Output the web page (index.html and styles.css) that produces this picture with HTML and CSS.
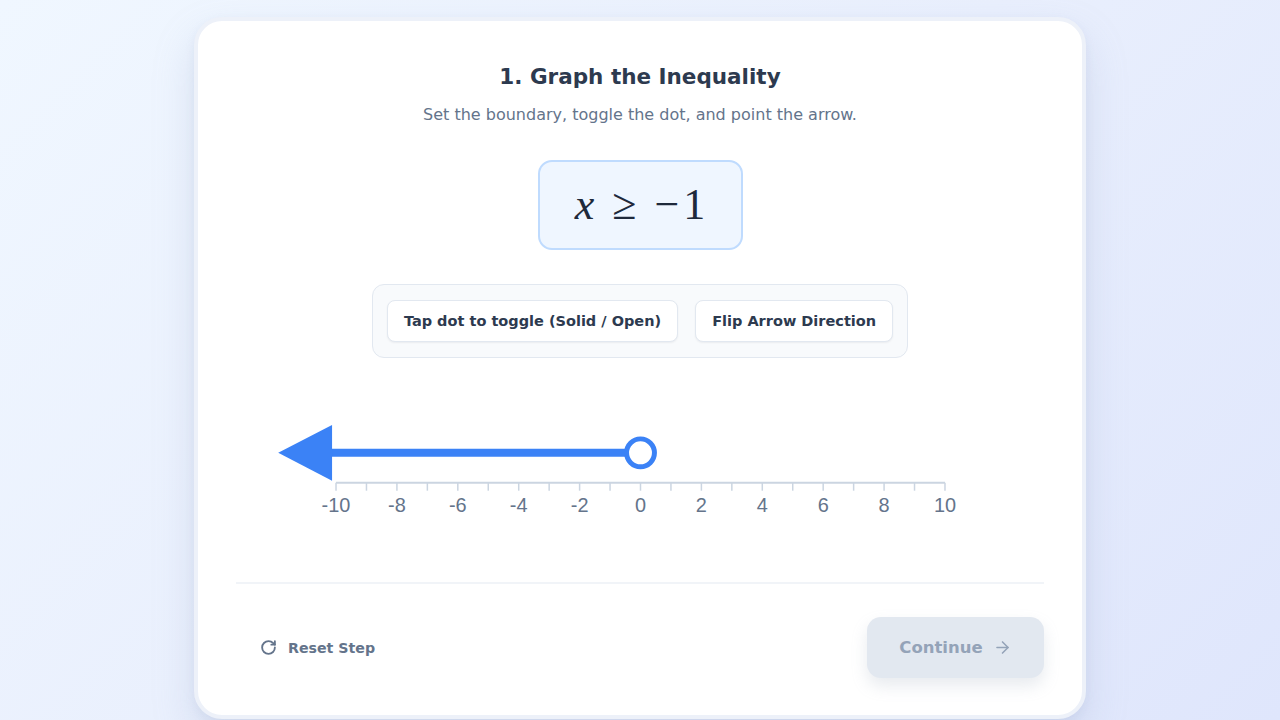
FILE: index.html
```html
<!DOCTYPE html>
<html lang="en">
<head>
<meta charset="utf-8">
<title>Graph the Inequality</title>
<link rel="stylesheet" href="styles.css">
</head>
<body>
<main class="card">
  <h1 class="title">1. Graph the Inequality</h1>
  <p class="subtitle">Set the boundary, toggle the dot, and point the arrow.</p>
  <div class="math-box"><span class="var">x</span><span class="op">≥</span><span class="num">−1</span></div>
  <div class="controls">
    <button class="ctrl-btn">Tap dot to toggle (Solid / Open)</button>
    <button class="ctrl-btn">Flip Arrow Direction</button>
  </div>
  <svg class="numberline" width="808" height="140" viewBox="0 0 808 140">
    <line x1="99" y1="83" x2="710" y2="83" stroke="#cbd5e1" stroke-width="2"/>
    <g stroke="#cbd5e1" stroke-width="1.5">
      <line x1="99" y1="83" x2="99" y2="91"/><line x1="129.55" y1="83" x2="129.55" y2="91"/>
      <line x1="160.1" y1="83" x2="160.1" y2="91"/><line x1="190.65" y1="83" x2="190.65" y2="91"/>
      <line x1="221.2" y1="83" x2="221.2" y2="91"/><line x1="251.75" y1="83" x2="251.75" y2="91"/>
      <line x1="282.3" y1="83" x2="282.3" y2="91"/><line x1="312.85" y1="83" x2="312.85" y2="91"/>
      <line x1="343.4" y1="83" x2="343.4" y2="91"/><line x1="373.95" y1="83" x2="373.95" y2="91"/>
      <line x1="404.5" y1="83" x2="404.5" y2="91"/><line x1="435.05" y1="83" x2="435.05" y2="91"/>
      <line x1="465.6" y1="83" x2="465.6" y2="91"/><line x1="496.15" y1="83" x2="496.15" y2="91"/>
      <line x1="526.7" y1="83" x2="526.7" y2="91"/><line x1="557.25" y1="83" x2="557.25" y2="91"/>
      <line x1="587.8" y1="83" x2="587.8" y2="91"/><line x1="618.35" y1="83" x2="618.35" y2="91"/>
      <line x1="648.9" y1="83" x2="648.9" y2="91"/><line x1="679.45" y1="83" x2="679.45" y2="91"/>
      <line x1="710" y1="83" x2="710" y2="91"/>
    </g>
    <g class="labels" text-anchor="middle">
      <text x="99" y="112">-10</text><text x="160.1" y="112">-8</text>
      <text x="221.2" y="112">-6</text><text x="282.3" y="112">-4</text>
      <text x="343.4" y="112">-2</text><text x="404.5" y="112">0</text>
      <text x="465.6" y="112">2</text><text x="526.7" y="112">4</text>
      <text x="587.8" y="112">6</text><text x="648.9" y="112">8</text>
      <text x="710" y="112">10</text>
    </g>
    <line x1="92" y1="53" x2="392" y2="53" stroke="#3b82f6" stroke-width="8"/>
    <polygon points="41,53 95,25 95,81" fill="#3b82f6"/>
    <circle cx="404.5" cy="53" r="14" fill="#ffffff" stroke="#3b82f6" stroke-width="5"/>
  </svg>
  <hr class="divider">
  <div class="footer">
    <button class="reset-btn">
      <svg width="17" height="17" viewBox="0 0 24 24" fill="none" stroke="currentColor" stroke-width="2.6" stroke-linecap="round" stroke-linejoin="round"><path d="M21 12a9 9 0 1 1-9-9c2.52 0 4.93 1 6.74 2.74L21 8"/><path d="M21 3v5h-5"/></svg>
      <span>Reset Step</span>
    </button>
    <button class="continue-btn" disabled>
      <span>Continue</span>
      <svg width="19" height="19" viewBox="0 0 24 24" fill="none" stroke="currentColor" stroke-width="2" stroke-linecap="round" stroke-linejoin="round"><path d="M5 12h14"/><path d="m12 5 7 7-7 7"/></svg>
    </button>
  </div>
</main>
</body>
</html>
```

FILE: styles.css
```css
* { box-sizing: border-box; }

html, body { height: 100%; }

body {
  margin: 0;
  overflow: hidden;
  font-family: "DejaVu Sans", Verdana, sans-serif;
  background: linear-gradient(135deg, #f0f7ff 0%, #e9effd 50%, #dfe6fc 100%);
  display: flex;
  justify-content: center;
  padding-top: 17px;
}

.card {
  width: 892px;
  height: 702px;
  flex-shrink: 0;
  background: #ffffff;
  border: 4px solid #edf1f9;
  border-radius: 28px;
  box-shadow: 0 20px 40px rgba(148, 163, 200, 0.25), 0 4px 10px rgba(148, 163, 200, 0.12);
  padding: 40px 38px 37px;
  display: flex;
  flex-direction: column;
  align-items: center;
}

.title {
  margin: 0;
  font-size: 21.5px;
  line-height: 31px;
  font-weight: 700;
  color: #2d3a4f;
}

.subtitle {
  margin: 11px 0 0;
  font-size: 16px;
  line-height: 24px;
  color: #64748b;
}

.math-box {
  margin-top: 33px;
  width: 205px;
  height: 90px;
  border: 2px solid #bfdbfe;
  background: #eff6ff;
  border-radius: 14px;
  display: flex;
  align-items: center;
  justify-content: center;
  font-family: "Liberation Serif", "Times New Roman", serif;
  font-size: 44px;
  color: #1e293b;
}

.math-box .var { font-style: italic; margin-right: 18px; }
.math-box .op { margin-right: 18px; }
.math-box .num { letter-spacing: 4px; margin-right: -4px; }

.controls {
  margin-top: 34px;
  width: 536px;
  height: 75px;
  background: #f8fafc;
  border: 1px solid #e2e8f0;
  border-radius: 12px;
  display: flex;
  align-items: center;
  justify-content: center;
  gap: 17px;
}

.ctrl-btn {
  height: 42px;
  padding: 0 16px;
  background: #ffffff;
  border: 1px solid #e2e8f0;
  border-radius: 8px;
  box-shadow: 0 1px 2px rgba(15, 23, 42, 0.06);
  font-family: "DejaVu Sans", Verdana, sans-serif;
  font-size: 14.5px;
  font-weight: 700;
  color: #2d3a4f;
}

.numberline {
  margin-top: 42px;
  display: block;
}

.labels text {
  font-family: "Liberation Sans", Arial, sans-serif;
  font-size: 20px;
  fill: #64748b;
}

.divider {
  margin: 42px 0 0;
  width: 100%;
  border: 0;
  border-top: 2px solid #f1f4f8;
}

.footer {
  margin-top: 33px;
  width: 100%;
  display: flex;
  align-items: center;
  justify-content: space-between;
}

.reset-btn {
  display: flex;
  align-items: center;
  gap: 11px;
  padding: 0 24px;
  background: none;
  border: 0;
  font-family: "DejaVu Sans", Verdana, sans-serif;
  font-size: 14.2px;
  font-weight: 700;
  color: #64748b;
}

.continue-btn {
  width: 177px;
  height: 61px;
  display: flex;
  align-items: center;
  justify-content: center;
  gap: 10px;
  background: #e2e8f0;
  border: 0;
  border-radius: 14px;
  box-shadow: 0 8px 16px rgba(148, 163, 184, 0.22);
  font-family: "DejaVu Sans", Verdana, sans-serif;
  font-size: 16.5px;
  font-weight: 700;
  color: #94a3b8;
}
```
